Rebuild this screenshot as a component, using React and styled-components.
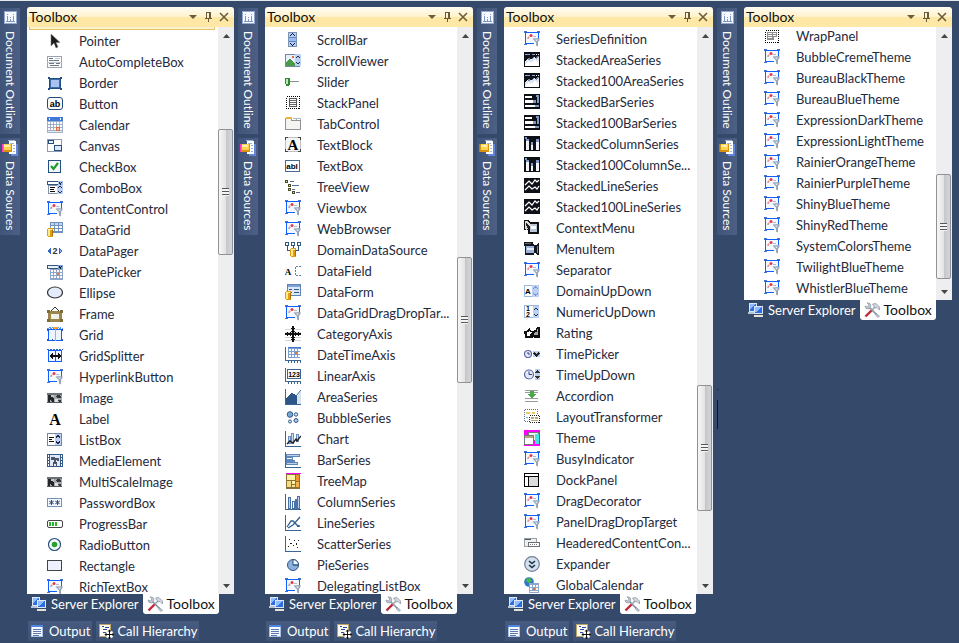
import React from "react";
import styled, { createGlobalStyle } from "styled-components";

const BLUE = "#3b6ea5";
const NAVY = "#2b4f81";

// small drawing helpers for the 16x16 icons
const R = ({ x, y, w, h, f }) => <rect x={x} y={y} width={w} height={h} fill={f} />;
const Box = ({ x, y, w, h, f = "#fff", s = BLUE }) => (
  <rect x={x + 0.5} y={y + 0.5} width={w - 1} height={h - 1} fill={f} stroke={s} />
);
const L = ({ d, s = NAVY, w = 1, ...rest }) => (
  <path d={d} fill="none" stroke={s} strokeWidth={w} {...rest} />
);
const T = ({ x, y, size, children, f = "#000", serif, weight = "bold" }) => (
  <text
    x={x}
    y={y}
    fontSize={size}
    fill={f}
    fontWeight={weight}
    textAnchor="middle"
    fontFamily={serif ? '"Liberation Serif", serif' : '"Liberation Sans", sans-serif'}
  >
    {children}
  </text>
);
const Smooth = ({ children }) => <g shapeRendering="auto">{children}</g>;

const Axes = () => <L d="M.5 0V15.5H16" s="#3a6594" />;

const Cylinder = ({ x, y }) => (
  <g transform={`translate(${x} ${y})`}>
    <path d="M0 1L1 0H5L6 1V8L5 9H1L0 8z" fill="#e0a010" />
    <path d="M1 2H3V8H1z" fill="#ffe88a" />
    <path d="M1 1H5V2H1z" fill="#fff3b8" />
    <path d="M5 2H6V8H5z" fill="#a8700a" />
  </g>
);

const UpDown = ({ x, y }) => (
  <g>
    <R x={x} y={y} w={6} h={12} f="#bcd0f4" />
    <L d={`M${x + 1} ${y + 4}l2 -2l2 2M${x + 1} ${y + 8}l2 2l2 -2`} s="#1b2c4c" />
  </g>
);

const CalGrid = ({ x, y }) => (
  <g>
    <R x={x} y={y} w={12} h={10} f="#7d9fd0" />
    {[0, 1, 2, 3].map((i) =>
      [0, 1, 2].map((j) => (
        <R
          key={`${i}${j}`}
          x={x + 1 + i * 3}
          y={y + 1 + j * 3}
          w={2}
          h={2}
          f={i === 2 && j === 1 ? "#f0703c" : "#fff"}
        />
      ))
    )}
  </g>
);

const Clock = ({ cx, cy, r }) => (
  <Smooth>
    <circle cx={cx} cy={cy} r={r} fill="#e4e8fa" stroke="#5a66a8" strokeWidth="1.2" />
    <L d={`M${cx} ${cy - r + 1.5}V${cy}H${cx + r - 1.5}`} s="#33407c" />
  </Smooth>
);

const Photo = () => (
  <g>
    <R x={0} y={3} w={15} h={10} f="#a4a8ac" />
    <R x={0} y={3} w={15} h={2} f="#6c7176" />
    <path d="M1 5H4L7 9V12H5L3 9V12H1z" fill="#22252a" />
    <path d="M8 6L12 5L14 7V8L10 8zM11 10H14V12H12z" fill="#34383e" />
    <R x={8} y={9} w={3} h={3} f="#dcdee0" />
    <R x={4} y={5} w={3} h={2} f="#c4c6c8" />
    <R x={0} y={12} w={15} h={1} f="#55595e" />
  </g>
);

const StackBlack = () => <R x={0} y={0} w={16} h={15} f="#0d1016" />;

const icons = {
  pointer: (
    <Smooth>
      <path d="M4 1V13L7 10L9 15L11 14L9 9.500H13z" fill="#1c1c1c" stroke="#777" strokeWidth=".5" />
    </Smooth>
  ),
  autocomplete: (
    <g>
      <Box x={0} y={2} w={15} h={12} s="#9aa3ad" />
      <L d="M2 4.500H6M2 6.500H12M2 9.500H7M9 9.500H13M3 11.500H12" s="#6c7887" />
      <L d="M8 4.500H13M0 8.500H15" s="#c3c9d0" />
    </g>
  ),
  border: (
    <g>
      <Box x={2} y={3} w={12} h={11} f="#a9c3f0" s="#1f4e86" />
      <L d="M3.500 4.500H12.500V12.500H3.500z" s="#3f6da3" />
      <path d="M1 2h2v2h-2zM13 2h2v2h-2zM1 13h2v2h-2zM13 13h2v2h-2z" fill="#1f4e86" />
    </g>
  ),
  button: (
    <g>
      <Smooth>
        <rect x=".5" y="1.500" width="15" height="12" rx="2.500" fill="#fafafa" stroke="#234a78" />
      </Smooth>
      <T x={8} y={11} size={9}>ab</T>
    </g>
  ),
  calendar: (
    <g>
      <R x={0} y={0} w={16} h={4} f="#3f78d8" />
      <path d="M3 1v2l-2 -1zM13 1v2l2 -1z" fill="#fff" />
      <R x={0} y={4} w={16} h={12} f="#9fb0c8" />
      {[1, 4, 7, 10, 13].map((x) =>
        [5, 8, 11].map((y) => <R key={`${x}${y}`} x={x} y={y} w={2} h={2} f="#fff" />)
      )}
      <R x={9} y={10} w={4} h={4} f="#e8693c" />
      <R x={10} y={11} w={2} h={2} f="#ffc6a8" />
      <path d="M1 14h14v1H1z" fill="#e6ecf5" />
    </g>
  ),
  canvas: (
    <g>
      <Box x={0} y={1} w={15} h={13} s="#8c9bb0" />
      <Box x={1} y={2} w={6} h={4} f="#e9f0fb" s="#26507f" />
      <Box x={7} y={7} w={8} h={6} f="#dde8fa" s="#26507f" />
    </g>
  ),
  check: (
    <g>
      <Box x={1} y={1} w={13} h={13} f="#f4f8fd" s="#23507f" />
      <Smooth><L d="M4 7L6.500 10L11 4" s="#1f9d28" w={2.2} /></Smooth>
    </g>
  ),
  combo: (
    <g>
      <Box x={0} y={1} w={15} h={4} s="#33577f" />
      <R x={11} y={1} w={5} h={4} f="#a9c0e8" />
      <L d="M12 2L13.500 4L15 2" s="#1b2c4c" />
      <Box x={1} y={5} w={10} h={9} s="#8294ac" />
      <L d="M3 7.500H8M3 9.500H7M3 11.500H8" s="#111" />
      <R x={10} y={5} w={6} h={9} f="#bcd0f4" />
      <L d="M11 8L13 6L15 8M11 11L13 13L15 11" s="#1b2c4c" />
    </g>
  ),
  content: (
    <g>
      <path d="M2 2h12v10h-12z" fill="#f4f8ff" />
      <L d="M1.500 1V12.500H10M1 1.500H15M14.500 1V8" s="#1060ff" />
      <path d="M0 0h3v1h-3zM13 0h3v1h-3zM0 13h3v1h-3zM0 1h1v1h-1zM15 1h1v1h-1z" fill="#4a72c8" />
      <L d="M3 7.500H5M9 5.500H12" s="#b9bac8" />
      <Smooth>
        <circle cx="7" cy="4.500" r="1.500" fill="#e03a4a" />
        <circle cx="4.500" cy="6.500" r="1" fill="#ef8a90" />
        <path d="M8.500 7.500L15.500 7V9L14 11V15.500L12 14.500V11.500z" fill="#98a5b6" />
        <path d="M11 8.500h3l-1.500 2z" fill="#e4e9ef" />
      </Smooth>
    </g>
  ),
  datagrid: (
    <g>
      <R x={3} y={0} w={13} h={11} f="#6f8fbf" />
      {[4, 8, 12].map((x) => [1, 4, 7].map((y) => <R key={`${x}${y}`} x={x} y={y} w={3} h={2} f={y === 1 ? "#c6d6ef" : "#fff"} />))}
      <Cylinder x={0} y={6} />
    </g>
  ),
  datapager: (
    <g>
      <path d="M0 8L4 4.500V11.500zM16 8L12 4.500V11.500z" fill="#2f66c8" />
      <path d="M2 8L3 7V9zM14 8L13 7V9z" fill="#9fbcf0" />
      <T x={8} y={11} size={9} f="#333">2</T>
    </g>
  ),
  datepicker: (
    <g>
      <Box x={0} y={1} w={15} h={4} s="#33577f" f="#eaf1fb" />
      <R x={11} y={1} w={5} h={4} f="#7fa0d0" />
      <L d="M12 2L13.500 4L15 2" s="#122" />
      <R x={3} y={5} w={13} h={11} f="#8fa6c8" />
      {[4, 7, 10, 13].map((x) => [6, 9, 12].map((y) => <R key={`${x}${y}`} x={x} y={y} w={2} h={2} f={x === 10 && y === 9 ? "#f0703c" : "#fff"} />))}
    </g>
  ),
  ellipse: (
    <Smooth><ellipse cx="8" cy="7.500" rx="7.500" ry="5.500" fill="#e2ecfd" stroke="#333" strokeWidth="1.200" /></Smooth>
  ),
  frame: (
    <g>
      <Smooth><L d="M4 5L8 1L12 5" s="#333" /></Smooth>
      <rect x="2.500" y="6.500" width="11" height="8" fill="#f2f0ea" stroke="#9a854a" strokeWidth="3" />
      <path d="M0 4h3v3h-3zM13 4h3v3h-3zM0 13h3v3h-3zM13 13h3v3h-3z" fill="#7d6a36" />
    </g>
  ),
  grid: (
    <g>
      <Box x={1} y={2} w={14} h={12} f="#edf4ff" s="#1060ff" />
      <L d="M0 1.500H16M2 0.500H6M10 0.500H14" s="#5f8fe8" strokeDasharray="2 1" />
      <R x={8} y={2} w={1} h={12} f="#f5a71c" />
      <path d="M6 0h5l-2 3h-1z" fill="#f5a71c" />
      <path d="M0 2h2v2h-2zM14 2h2v2h-2zM0 12h2v2h-2zM14 12h2v2h-2zM5 12h1v2h-1z" fill="#1e55c8" />
    </g>
  ),
  gridsplitter: (
    <g>
      <Box x={1} y={2} w={14} h={12} f="#edf4ff" s="#1060ff" />
      <L d="M0 1.500H16" s="#2c63cf" strokeDasharray="2 1" />
      <L d="M8.500 2V14" s="#1060ff" />
      <path d="M2 8L6 5V7H11V5L15 8L11 11V9H6V11z" fill="#111" />
    </g>
  ),
  image: <Photo />,
  label: <T x={8} y={14} size={16} serif>A</T>,
  listbox: (
    <g>
      <Box x={0} y={1} w={15} h={13} s="#7187a3" />
      <L d="M2 5.500H7M2 7.500H5M2 9.500H7" s="#111" />
      <R x={8} y={2} w={6} h={11} f="#bcd0f4" />
      <L d="M9 5.500L11 3.500L13 5.500M9 9.500L11 11.500L13 9.500" s="#1b2c4c" />
    </g>
  ),
  media: (
    <g>
      <R x={0} y={1} w={16} h={13} f="#365a86" />
      <R x={3} y={2} w={10} h={11} f="#dfe8f4" />
      {[2, 5, 8, 11].map((y) => <path key={y} d={`M1 ${y}h1v2h-1zM14 ${y}h1v2h-1z`} fill="#fff" />)}
      <path d="M4 4h4v1h4v3h-2v-1h-1v2h1v4h-1v-2h-2v2h-1v-4h1v-2h-3z" fill="#4a5666" />
    </g>
  ),
  password: (
    <g>
      <Box x={0} y={3} w={15} h={9} f="#f2f7ff" s="#7593b8" />
      <Smooth>
        <L d="M4.500 5V10M2.300 6.200L6.700 8.800M6.700 6.200L2.300 8.800M10.500 5V10M8.300 6.200L12.700 8.800M12.700 6.200L8.300 8.800" s="#33476a" />
      </Smooth>
    </g>
  ),
  progress: (
    <g>
      <Smooth><rect x=".5" y="4.500" width="15" height="7" rx="1.500" fill="#fff" stroke="#444" /></Smooth>
      <path d="M2 6h2v4h-2zM5 6h2v4h-2zM8 6h2v4h-2z" fill="#27b52c" />
    </g>
  ),
  radio: (
    <Smooth>
      <circle cx="7.500" cy="7.500" r="6" fill="#f5f9ff" stroke="#28517f" strokeWidth="1.200" />
      <circle cx="7.500" cy="7.500" r="2.800" fill="#2aa02e" />
    </Smooth>
  ),
  rectangle: <Box x={0} y={2} w={15} h={11} f="#edf2fd" s="#444" />,
  scrollbar: (
    <g>
      <Box x={3} y={0} w={9} h={15} f="#b9cef4" s="#7a93b8" />
      <R x={4} y={5} w={7} h={5} f="#5c86c8" />
      <path d="M4 6h7v3H4z" fill="#9dbcf0" />
      <L d="M5 4L7.500 1.500L10 4M5 11L7.500 13.500L10 11" s="#101828" />
    </g>
  ),
  scrollviewer: (
    <g>
      <Box x={0} y={1} w={15} h={13} f="#e6effc" s="#7187a3" />
      <circle cx="8" cy="4" r="1.500" fill="#e8693c" />
      <path d="M1 13V10L5 5L10 11V13z" fill="#4b9a4a" />
      <R x={10} y={1} w={6} h={12} f="#bcd0f4" />
      <L d="M11 5L13 3L15 5M11 9L13 11L15 9" s="#1b2c4c" />
    </g>
  ),
  slider: (
    <g>
      <L d="M5 7.500H14" s="#8c9196" />
      <path d="M0 4h5v6l-1 1v1h-3v-1l-1 -1z" fill="#2d8a2e" />
      <path d="M1 5h2v5h-2z" fill="#b8f0b0" />
    </g>
  ),
  stackpanel: (
    <g>
      <L d="M1.500 1.500H14.500V13.500H1.500z" s="#000" strokeDasharray="1 1" />
      <Box x={4} y={3} w={8} h={9} s="#555" />
      <L d="M5 5.500H11M5 7.500H11M5 9.500H11" s="#666" />
    </g>
  ),
  wrappanel: (
    <g>
      <L d="M1.500 2.500H14.500V14.500H1.500z" s="#000" strokeDasharray="1 1" />
      <path d="M3 4h10v5h-3v3h-7z" fill="#8f8f8f" />
      <path d="M4 5h4v1h-4zM4 7h4v1h-4zM4 9h4v1h-4zM9 5h3v1h-3zM9 7h3v1h-3z" fill="#fff" />
    </g>
  ),
  tab: (
    <g>
      <path d="M.5 12.500V2.500L1.500 1.500H6.500V4.500H15.500V13.500H.5z" fill="#f4f4f0" stroke="#8f9296" />
      <R x={1} y={1} w={6} h={2} f="#f0b23c" />
      <L d="M8 2.500H11V4M12 2.500H15V4" s="#b5b8bc" />
    </g>
  ),
  textblock: (
    <g>
      <Box x={0} y={0} w={16} h={15} f="#f5f5f5" s="#c0c0c0" />
      <path d="M0 0h3v1H1v2H0zM13 0h3v3h-1V1h-2zM0 12h1v2h2v1H0zM15 12h1v3h-3v-1h2z" fill="#444" />
      <T x={8} y={13} size={15} serif>A</T>
    </g>
  ),
  textbox: (
    <g>
      <Box x={0} y={2} w={15} h={12} s="#4a6a92" />
      <T x={7} y={11} size={8}>abl</T>
    </g>
  ),
  treeview: (
    <g>
      <path d="M0 1h3v3h-3zM3 5h3v3h-3zM3 9h3v3h-3zM7 12h3v3h-3z" fill="#4b4b28" />
      <path d="M1 2h1v1h-1zM4 6h1v1h-1zM4 10h1v1h-1zM8 13h1v1h-1z" fill="#e8d98c" />
      <L d="M5 2.500H9M7 6.500H14M7 10.500H10M11 13.500H15" s="#4f6f99" />
    </g>
  ),
  domainds: (
    <g>
      <Box x={0} y={0} w={4} h={4} s="#33577f" />
      <Box x={6} y={0} w={4} h={4} s="#33577f" />
      <Box x={12} y={0} w={4} h={4} s="#33577f" />
      <L d="M2.500 4V8.500H5M8.500 4V6M13.500 4V8.500H11" s="#33577f" />
      <Cylinder x={5} y={6} />
    </g>
  ),
  datafield: (
    <g>
      <T x={3} y={12} size={9} serif>A</T>
      <L d="M16 3.500H10.500V12.500H16" s="#5f7ea8" strokeDasharray="2 1" />
    </g>
  ),
  dataform: (
    <g>
      <Box x={2} y={0} w={14} h={12} f="#dbe7fa" s="#5f83b5" />
      <R x={3} y={1} w={12} h={2} f="#7fa3d8" />
      <L d="M4 5.500H7M4 8.500H7M9 5.500H14M9 8.500H14" s="#33577f" />
      <Cylinder x={0} y={7} />
    </g>
  ),
  categoryaxis: (
    <g>
      <L d="M0 3.500H16M0 6.500H16M0 11.500H16M0 14.500H16" s="#d5d5d5" />
      <L d="M8 0V16M0 8H16" s="#111" w={2} />
      <L d="M2.500 6V10M5.500 6V10M10.500 6V10M13.500 6V10M6 2.500H10M6 5.500H10M6 11.500H10M6 13.500H10" s="#111" />
    </g>
  ),
  datetimeaxis: (
    <g>
      <L d="M.5 0V13.500H16" s="#3a6594" />
      <L d="M3.500 14V16M6.500 14V16M9.500 14V16M12.500 14V16M15.500 14V16" s="#3a6594" />
      <R x={3} y={0} w={13} h={2} f="#3f78d8" />
      <CalGrid x={3} y={1} />
    </g>
  ),
  linearaxis: (
    <g>
      <L d="M.5 0V13.500H16" s="#3a6594" />
      <L d="M3.500 14V16M6.500 14V16M9.500 14V16M12.500 14V16M15.500 14V16" s="#3a6594" />
      <Box x={2} y={1} w={14} h={10} s="#3a6594" />
      <T x={9} y={9} size={7}>123</T>
    </g>
  ),
  area: (
    <g>
      <path d="M1 15V9L6 4L9 5L12 8L12 15z" fill="#2c5687" />
      <path d="M12 8L16 2V15H12z" fill="#d8e3f2" />
      <Smooth><L d="M11 7L16 1" s="#3a6594" /></Smooth>
      <Axes />
    </g>
  ),
  bubble: (
    <Smooth>
      <circle cx="5" cy="4.500" r="2.800" fill="#7aa6d4" stroke="#2c5687" />
      <circle cx="11" cy="4.500" r="1.700" fill="#dce9f7" stroke="#2c5687" />
      <circle cx="5" cy="11.500" r="1.500" fill="#dce9f7" stroke="#2c5687" />
      <circle cx="11" cy="10.500" r="2" fill="#a9c8e8" stroke="#2c5687" />
    </Smooth>
  ),
  chart: (
    <g>
      <Axes />
      <Box x={3} y={5} w={3} h={8} f="#c9daf2" s="#6b8fc0" />
      <Box x={6} y={2} w={3} h={11} f="#c9daf2" s="#6b8fc0" />
      <Box x={11} y={3} w={3} h={8} f="#c9daf2" s="#6b8fc0" />
      <Smooth><L d="M2 13L5 10L8 12L11 8L12 10L16 5" s="#222" w={1.400} /></Smooth>
    </g>
  ),
  bar: (
    <g>
      <Axes />
      <Box x={1} y={2} w={14} h={3} f="#bcd0ee" s="#5f86b8" />
      <Box x={1} y={5} w={7} h={3} f="#fff" s="#5f86b8" />
      <Box x={1} y={8} w={9} h={2} f="#bcd0ee" s="#5f86b8" />
      <Box x={1} y={10} w={12} h={3} f="#bcd0ee" s="#5f86b8" />
    </g>
  ),
  treemap: (
    <g>
      <R x={1} y={0} w={14} h={16} f="#8a7238" />
      <R x={1} y={0} w={15} h={1} f="#ff00ff" />
      <R x={2} y={2} w={8} h={5} f="#fff2a8" />
      <R x={2} y={8} w={4} h={6} f="#f3dc84" />
      <R x={7} y={8} w={3} h={3} f="#fff2a8" />
      <R x={11} y={2} w={3} h={6} f="#f0982c" />
      <R x={11} y={9} w={3} h={5} f="#f5b44a" />
      <R x={7} y={12} w={3} h={2} f="#fbe48a" />
    </g>
  ),
  column: (
    <g>
      <Axes />
      <Box x={3} y={3} w={3} h={12} f="#bcd0ee" s="#4a74a8" />
      <Box x={7} y={7} w={3} h={8} f="#fff" s="#4a74a8" />
      <Box x={10} y={5} w={2} h={10} f="#bcd0ee" s="#4a74a8" />
      <Box x={12} y={2} w={3} h={13} f="#bcd0ee" s="#4a74a8" />
    </g>
  ),
  line: (
    <g>
      <Axes />
      <Smooth><L d="M2 12L6 6H8L13 11L15 11M3 13L8 10L15 2" s="#33608f" w={1.300} /></Smooth>
      <R x={12} y={10} w={2} h={2} f="#33608f" />
    </g>
  ),
  scatter: (
    <g>
      <Axes />
      <path d="M4 3h1v1h-1zM5 7h2v1h-2zM3 10h1v1h-1zM9 4h1v1h-1zM8 9h1v1h-1zM11 7h1v2h-1zM13 4h1v1h-1zM12 11h1v1h-1z" fill="#222" />
    </g>
  ),
  pie: (
    <Smooth>
      <circle cx="8" cy="8" r="5.500" fill="#8fb2dc" stroke="#2c5687" />
      <path d="M8 8V2.500A5.500 5.500 0 0 1 13.500 8z" fill="#f4f8fd" stroke="#2c5687" />
      <path d="M8 8H13.500" stroke="#2c5687" />
    </Smooth>
  ),
  stackedarea: (
    <g>
      <StackBlack />
      <path d="M1 2h5v1h-5zM8 2h3v1h-3z" fill="#8fa6d8" />
      <path d="M12 2h1v1h-1zM14 2h1v1h-1z" fill="#fff" />
      <path d="M1 9L4 6L7 7L9 5L11 6L14 4H15V14H1z" fill="#7486a8" />
      <path d="M1 11V9L3 7L5 8L7 6L8 8L10 5L12 7L15 5V14H1z" fill="#dfe5f0" />
      <path d="M1 14V12L4 9L6 11L8 10L11 8L13 10L15 8V14z" fill="#fff" />
    </g>
  ),
  stackedbar: (
    <g>
      <StackBlack />
      <path d="M1 2h7v2h-7zM1 6h8v3h-8zM1 11h10v2h-10z" fill="#fff" />
      <path d="M12 1h3v2h-3zM13 3h2v6h-2zM9 6h3v3h-3zM11 11h4v2h-4z" fill="#8298c4" />
    </g>
  ),
  stackedcolumn: (
    <g>
      <StackBlack />
      <path d="M2 5h3v9h-3zM7 9h2v5h-2zM12 6h3v8h-3z" fill="#f0f2f8" />
      <path d="M1 1h2v2h-2zM2 3h3v2h-3zM7 6h2v3h-2zM12 3h3v3h-3z" fill="#8298c4" />
    </g>
  ),
  stackedline: (
    <g>
      <StackBlack />
      <Smooth><L d="M1 7L5 3L8 6L11 2L13 4L15 2M1 12L5 8L8 11L11 9L13 11L15 8" s="#fff" w={1.200} /></Smooth>
    </g>
  ),
  contextmenu: (
    <g>
      <path d="M0 0h4l2 2h9v12h-11v-4h-4z" fill="#111" />
      <R x={6} y={4} w={7} h={8} f="#b8c4d8" />
      <R x={7} y={6} w={5} h={3} f="#fff" />
      <path d="M1 1h2l5 5l-3 1l-2 3l-2 -1z" fill="#d8d8d8" />
      <path d="M2 3l4 4l-3 1z" fill="#222" />
    </g>
  ),
  menuitem: (
    <g>
      <path d="M0 1h9l1 3h2l2 -2h1v12h-2l-2 -2h-1v2H1V5H0z" fill="#15181f" />
      <R x={2} y={5} w={8} h={7} f="#9db2dc" />
      <R x={3} y={7} w={7} h={2} f="#e6ecfa" />
      <R x={13} y={5} w={1} h={7} f="#7a8ab0" />
      <R x={1} y={2} w={6} h={1} f="#666" />
    </g>
  ),
  domainupdown: (
    <g>
      <Box x={0} y={2} w={15} h={12} s="#9db6dc" />
      <R x={8} y={2} w={7} h={12} f="#bcd0f4" />
      <L d="M9 6L11.500 4L14 6M9 10L11.500 12L14 10" s="#7893c4" />
      <T x={4} y={11} size={8}>A</T>
    </g>
  ),
  numericupdown: (
    <g>
      <Box x={0} y={1} w={15} h={13} s="#9db6dc" />
      <UpDown x={9} y={2} />
      <T x={4} y={7} size={7}>1</T>
      <T x={4} y={13} size={7}>2</T>
    </g>
  ),
  rating: (
    <g>
      <path d="M0 6h3l2 -3h1l1 3h2l1 -1h2l1 -3h3v11h-6l-1 -1l-1 1h-7v-3l-1 -2z" fill="#111" />
      <path d="M3 7h1l1 -1h1v1h2l-2 2v2h-3z" fill="#fff" />
      <path d="M11 7h2v-3h1v6h-4z" fill="#a8a8a8" />
    </g>
  ),
  timepicker: (
    <g>
      <Clock cx={4} cy={8} r={3.500} />
      <R x={9} y={5} w={7} h={6} f="#bcd0f4" />
      <L d="M10 7L12.500 9.500L15 7" s="#222" w={1.500} />
    </g>
  ),
  timeupdown: (
    <g>
      <Clock cx={5} cy={7.500} r={4.500} />
      <R x={11} y={2} w={5} h={11} f="#bcd0f4" />
      <path d="M11 6h5l-2.500 -3zM11 9h5l-2.500 3z" fill="#333" />
    </g>
  ),
  accordion: (
    <g>
      <L d="M1 2.500H14M1 4.500H14M1 10.500H14M1 13.500H14" s="#9a9a9a" />
      <path d="M6 3h4v3h2l-4 5l-4 -5h2z" fill="#4aa84a" />
    </g>
  ),
  layout: (
    <g>
      <L d="M.5 .5H13.500V5M.5 1V12.500H5" s="#4a74b0" strokeDasharray="1 1" />
      <path d="M2 3h4v2h-4zM8 3h3v2h-3z" fill="#f0c860" />
      <L d="M5.500 6.500H15.500V13.500H5.500z" s="#222" strokeDasharray="1 1" />
      <path d="M7 8h3v2h-3zM11 8h3v2h-3zM7 11h7v1h-7z" fill="#b8a878" />
      <L d="M2 8.500H4" s="#8aa0c0" />
    </g>
  ),
  theme: (
    <g>
      <R x={0} y={0} w={16} h={16} f="#ff00ff" />
      <Box x={4} y={2} w={11} h={9} f="#e8f4f4" s="#777" />
      <R x={11} y={4} w={4} h={10} f="#45e0e0" />
      <Box x={0} y={5} w={10} h={10} f="#fff" s="#777" />
      <R x={1} y={6} w={8} h={2} f="#b4a878" />
    </g>
  ),
  dockpanel: (
    <g>
      <Box x={0} y={1} w={15} h={14} f="#dcdcdc" s="#000" />
      <R x={1} y={2} w={13} h={2} f="#fff" />
      <R x={1} y={4} w={3} h={10} f="#fff" />
      <L d="M0 4.500H15M4.500 4V15" s="#000" />
    </g>
  ),
  headered: (
    <g>
      <Box x={0} y={3} w={13} h={9} f="#eef0f2" s="#9aa0a8" />
      <L d="M1 4.500H7" s="#555" />
      <Box x={4} y={7} w={12} h={5} f="#fff" s="#6a7078" />
      <L d="M6 9.500H14" s="#777" strokeDasharray="1 1" />
    </g>
  ),
  expander: (
    <Smooth>
      <circle cx="8" cy="8" r="7.300" fill="#d4e0ee" stroke="#6c8098" strokeWidth="1.200" />
      <L d="M5 5L8 7.500L11 5M5 9L8 11.500L11 9" s="#1c3048" w={1.600} />
    </Smooth>
  ),
  globe: (
    <g>
      <Smooth>
        <circle cx="5" cy="5" r="4.800" fill="#2f78c8" />
        <path d="M2 2L6 1L8 4L5 6L3 5zM5 7L8 8L6 10z" fill="#4cb848" />
      </Smooth>
      <R x={5} y={6} w={10} h={10} f="#8fa6c8" />
      {[6, 9, 12].map((x) => [8, 11].map((y) => <R key={`${x}${y}`} x={x} y={y} w={2} h={2} f={x === 9 && y === 11 ? "#e8693c" : "#fff"} />))}
      <R x={6} y={14} w={8} h={1} f="#fff" />
    </g>
  ),
  outline: (
    <g>
      <R x={2} y={1} w={13} h={13} f="#93a9d2" />
      <R x={3} y={2} w={11} h={11} f="#f6f9ff" />
      <L d="M5.500 4V5M5.500 6V11M8.500 7V8M8.500 9V11M11.500 4V5M11.500 6V11" s="#7e95c4" />
      <L d="M4 11.500H13" s="#7e95c4" />
    </g>
  ),
  sources: (
    <g>
      <R x={9} y={4} w={7} h={12} f="#5f86d8" />
      <R x={7} y={1} w={7} h={13} f="#fff" />
      <L d="M6 .5H13M8 3.500H12M11 5.500H13M11 8.500H13M11 11.500H13" s="#9db2dc" />
      <R x={0} y={4} w={10} h={8} f="#d89410" />
      <R x={2} y={4} w={7} h={6} f="#ffd44c" />
      <R x={2} y={5} w={6} h={2} f="#fff0b0" />
      <R x={0} y={4} w={1} h={8} f="#ff38b8" />
    </g>
  ),
  server: (
    <g>
      <Box x={1} y={1} w={8} h={9} f="#2f6ee0" s="#dbe6f6" />
      <path d="M2 2h5l-4 5h-1z" fill="#8fbcff" />
      <R x={0} y={10} w={7} h={2} f="#b8c4d4" />
      <Box x={6} y={4} w={9} h={8} f="#2f6ee0" s="#dbe6f6" />
      <path d="M7 5h6l-4 5h-2z" fill="#8fbcff" />
      <R x={6} y={13} w={9} h={2} f="#e6e2d4" />
    </g>
  ),
  tools: (
    <Smooth>
      <L d="M5 5L12.500 12.500" s="#8390a0" w={1.600} />
      <path d="M1 4L3.500 5L5 3L3 .8L6 1.500L7 4L5 7L2 6.500z" fill="#c2cad4" stroke="#7a8594" strokeWidth=".6" />
      <path d="M12 11.500L15.500 14L14 15.500L11.500 13z" fill="#c2cad4" stroke="#7a8594" strokeWidth=".6" />
      <L d="M1.500 14.500L7.500 8.500" s="#c3273a" w={2.400} />
      <L d="M8 8L11.500 4.500" s="#9aa4b2" w={1.600} />
      <path d="M8.500 2L12 1.500L15.500 5V8L13 5.500L11 6z" fill="#d0d6de" stroke="#7a8594" strokeWidth=".6" />
    </Smooth>
  ),
  output: (
    <g>
      <Box x={1} y={2} w={12} h={12} f="#f6f9ff" s="#a8c0e8" />
      <R x={1} y={2} w={12} h={2} f="#4f86e0" />
      <L d="M3 6.500H11M3 8.500H11M3 10.500H11M3 12.500H9" s="#5b78b0" />
    </g>
  ),
  hierarchy: (
    <g>
      <Box x={1} y={1} w={12} h={13} f="#fdfbf0" s="#b8a468" />
      <L d="M4 3.500H6M5 6.500H9M5 9.500H8M7 4.500H11" s="#2848a8" />
      <Smooth>
        <circle cx="11.500" cy="11.500" r="4" fill="#fff" />
        <path d="M11.500 6.500L13.500 8.500H9.500zM11.500 16.500L13.500 14.500H9.500zM6.500 11.500L8.500 9.500V13.500zM16.500 11.500L14.500 9.500V13.500z" fill="#111" />
        <L d="M11.500 8V15M8 11.500H15" s="#111" />
      </Smooth>
    </g>
  ),
};

function Icon({ name }) {
  return (
    <IconSvg viewBox="0 0 16 16" shapeRendering="crispEdges" aria-hidden="true">
      {icons[name]}
    </IconSvg>
  );
}

const panels = [
  {
    rows: 27,
    offset: 3,
    thumb: [85, 126],
    selected: true,
    footer: true,
    items: [
      ["pointer", "Pointer"],
      ["autocomplete", "AutoCompleteBox"],
      ["border", "Border"],
      ["button", "Button"],
      ["calendar", "Calendar"],
      ["canvas", "Canvas"],
      ["check", "CheckBox"],
      ["combo", "ComboBox"],
      ["content", "ContentControl"],
      ["datagrid", "DataGrid"],
      ["datapager", "DataPager"],
      ["datepicker", "DatePicker"],
      ["ellipse", "Ellipse"],
      ["frame", "Frame"],
      ["grid", "Grid"],
      ["gridsplitter", "GridSplitter"],
      ["content", "HyperlinkButton"],
      ["image", "Image"],
      ["label", "Label"],
      ["listbox", "ListBox"],
      ["media", "MediaElement"],
      ["image", "MultiScaleImage"],
      ["password", "PasswordBox"],
      ["progress", "ProgressBar"],
      ["radio", "RadioButton"],
      ["rectangle", "Rectangle"],
      ["content", "RichTextBox"],
    ],
  },
  {
    rows: 27,
    offset: 2,
    thumb: [213, 126],
    footer: true,
    items: [
      ["scrollbar", "ScrollBar"],
      ["scrollviewer", "ScrollViewer"],
      ["slider", "Slider"],
      ["stackpanel", "StackPanel"],
      ["tab", "TabControl"],
      ["textblock", "TextBlock"],
      ["textbox", "TextBox"],
      ["treeview", "TreeView"],
      ["content", "Viewbox"],
      ["content", "WebBrowser"],
      ["domainds", "DomainDataSource"],
      ["datafield", "DataField"],
      ["dataform", "DataForm"],
      ["content", "DataGridDragDropTar..."],
      ["categoryaxis", "CategoryAxis"],
      ["datetimeaxis", "DateTimeAxis"],
      ["linearaxis", "LinearAxis"],
      ["area", "AreaSeries"],
      ["bubble", "BubbleSeries"],
      ["chart", "Chart"],
      ["bar", "BarSeries"],
      ["treemap", "TreeMap"],
      ["column", "ColumnSeries"],
      ["line", "LineSeries"],
      ["scatter", "ScatterSeries"],
      ["pie", "PieSeries"],
      ["content", "DelegatingListBox"],
    ],
  },
  {
    rows: 27,
    offset: 1,
    thumb: [341, 126],
    footer: true,
    items: [
      ["content", "SeriesDefinition"],
      ["stackedarea", "StackedAreaSeries"],
      ["stackedarea", "Stacked100AreaSeries"],
      ["stackedbar", "StackedBarSeries"],
      ["stackedbar", "Stacked100BarSeries"],
      ["stackedcolumn", "StackedColumnSeries"],
      ["stackedcolumn", "Stacked100ColumnSe..."],
      ["stackedline", "StackedLineSeries"],
      ["stackedline", "Stacked100LineSeries"],
      ["contextmenu", "ContextMenu"],
      ["menuitem", "MenuItem"],
      ["content", "Separator"],
      ["domainupdown", "DomainUpDown"],
      ["numericupdown", "NumericUpDown"],
      ["rating", "Rating"],
      ["timepicker", "TimePicker"],
      ["timeupdown", "TimeUpDown"],
      ["accordion", "Accordion"],
      ["layout", "LayoutTransformer"],
      ["theme", "Theme"],
      ["content", "BusyIndicator"],
      ["dockpanel", "DockPanel"],
      ["content", "DragDecorator"],
      ["content", "PanelDragDropTarget"],
      ["headered", "HeaderedContentCon..."],
      ["expander", "Expander"],
      ["globe", "GlobalCalendar"],
    ],
  },
  {
    rows: 13,
    offset: -2,
    thumb: [130, 105],
    caret: true,
    items: [
      ["wrappanel", "WrapPanel"],
      ["content", "BubbleCremeTheme"],
      ["content", "BureauBlackTheme"],
      ["content", "BureauBlueTheme"],
      ["content", "ExpressionDarkTheme"],
      ["content", "ExpressionLightTheme"],
      ["content", "RainierOrangeTheme"],
      ["content", "RainierPurpleTheme"],
      ["content", "ShinyBlueTheme"],
      ["content", "ShinyRedTheme"],
      ["content", "SystemColorsTheme"],
      ["content", "TwilightBlueTheme"],
      ["content", "WhistlerBlueTheme"],
    ],
  },
];

function Toolbox({ panel }) {
  return (
    <Column>
      <Rail>
        <RailTab>
          <Icon name="outline" />
          Document Outline
        </RailTab>
        <RailTab>
          <Icon name="sources" />
          Data Sources
        </RailTab>
        {panel.caret && <Caret />}
      </Rail>
      <Main>
        <Header>
          <Title>Toolbox</Title>
          <HeaderButton aria-label="Window position">
            <svg width="9" height="10" viewBox="0 0 9 10">
              <path d="M0 3H8L4 7z" fill="#6b5c3a" />
            </svg>
          </HeaderButton>
          <HeaderButton aria-label="Auto hide">
            <svg width="9" height="10" viewBox="0 0 9 10" shapeRendering="crispEdges">
              <path d="M2.500 6V.5H6.500V6M1 6.500H8M4.500 7V10" fill="none" stroke="#6b5c3a" />
              <path d="M5 1h1v5h-1z" fill="#6b5c3a" />
            </svg>
          </HeaderButton>
          <HeaderButton aria-label="Close">
            <svg width="10" height="10" viewBox="0 0 10 10">
              <path d="M1 1L9 9M9 1L1 9" fill="none" stroke="#6b5c3a" strokeWidth="1.600" />
            </svg>
          </HeaderButton>
        </Header>
        <Body $rows={panel.rows}>
          <List $offset={panel.offset}>
            {panel.selected && <SelectedEdge />}
            {panel.items.map(([icon, label]) => (
              <li key={label}>
                <Item>
                  <Icon name={icon} />
                  {label}
                </Item>
              </li>
            ))}
          </List>
          <ScrollBar>
            <ScrollButton aria-label="Scroll up">
              <svg width="7" height="4" viewBox="0 0 7 4">
                <path d="M0 4L3.500 0L7 4z" fill="#444" />
              </svg>
            </ScrollButton>
            <Track>
              <Thumb $top={panel.thumb[0]} $size={panel.thumb[1]}>
                <Grip />
              </Thumb>
            </Track>
            <ScrollButton aria-label="Scroll down">
              <svg width="7" height="4" viewBox="0 0 7 4">
                <path d="M0 0H7L3.500 4z" fill="#444" />
              </svg>
            </ScrollButton>
          </ScrollBar>
        </Body>
        <Tabs>
          <Tab>
            <Icon name="server" />
            Server Explorer
          </Tab>
          <Tab $active>
            <Icon name="tools" />
            Toolbox
          </Tab>
        </Tabs>
        {panel.footer && (
          <Footer>
            <FooterTab>
              <Icon name="output" />
              Output
            </FooterTab>
            <FooterTab>
              <Icon name="hierarchy" />
              Call Hierarchy
            </FooterTab>
          </Footer>
        )}
      </Main>
    </Column>
  );
}

export default function App() {
  return (
    <Page>
      <GlobalStyle />
      {panels.map((panel, index) => (
        <Toolbox key={index} panel={panel} />
      ))}
    </Page>
  );
}

const GlobalStyle = createGlobalStyle`
  * {
    box-sizing: border-box;
  }
  body {
    margin: 0;
    background-color: #35496a;
    font-family: Lato, "Open Sans", sans-serif;
    font-size: 13px;
    line-height: 20px;
  }
  button {
    font: inherit;
    color: inherit;
    border: none;
    background: none;
    padding: 0;
    margin: 0;
    white-space: nowrap;
  }
`;

const Page = styled.main`
  display: grid;
  grid-template-columns: 238fr 239fr 240fr 239fr;
  min-height: 100vh;
  padding: 6px 3px 0 0;
  border-top: 1px solid #e4e9ee;
`;

const Column = styled.section`
  display: flex;
  gap: 7px;
  min-width: 0;
  padding-right: 4px;
`;

const Rail = styled.nav`
  display: flex;
  flex-direction: column;
  flex: none;
  width: 20px;
  gap: 4px;
  padding-top: 1px;
`;

const RailTab = styled.button`
  display: flex;
  align-items: center;
  gap: 5px;
  width: 20px;
  padding: 2px 0 5px;
  writing-mode: vertical-rl;
  font-size: 12px;
  color: #fff;
  background: linear-gradient(to right, #3f5478, #4b6084);
`;

const Caret = styled.div`
  width: 1px;
  height: 40px;
  margin-top: 150px;
  background: linear-gradient(#10151f 1px, transparent 1px 11px, #10151f 11px);
`;

const Main = styled.div`
  flex: 1;
  min-width: 0;
`;

const Header = styled.header`
  display: flex;
  align-items: center;
  gap: 6px;
  height: 20px;
  padding: 0 5px 0 2px;
  border-radius: 3px 3px 0 0;
  background: linear-gradient(#fffcf2, #fff2cc 50%, #ffe8a6 50%, #ffe8a6);
`;

const Title = styled.h2`
  flex: 1;
  margin: 0;
  font-size: 14px;
  font-weight: 400;
  line-height: 20px;
  color: #111;
`;

const HeaderButton = styled.button`
  display: flex;
`;

const Body = styled.div`
  display: flex;
  height: ${({ $rows }) => $rows * 21}px;
  overflow: hidden;
  background-color: #fff;
`;

const List = styled.ul`
  flex: 1;
  min-width: 0;
  margin: 0;
  padding: 0;
  padding-top: ${({ $offset }) => Math.max($offset, 0)}px;
  margin-top: ${({ $offset }) => Math.min($offset, 0)}px;
  list-style: none;
  position: relative;
`;

const SelectedEdge = styled.li`
  position: absolute;
  top: 0;
  left: 2px;
  right: 3px;
  height: 3px;
  border: 1px solid #e5c365;
  border-top: none;
  background-color: #fff3cf;
`;

const Item = styled.button`
  display: flex;
  align-items: center;
  gap: 16px;
  width: 100%;
  height: 21px;
  padding-left: 20px;
  color: #1f2a3c;
`;

const IconSvg = styled.svg`
  flex: none;
  width: 16px;
  height: 16px;
`;

const ScrollBar = styled.div`
  display: flex;
  flex-direction: column;
  flex: none;
  width: 16px;
  background-color: #eeeef0;
`;

const ScrollButton = styled.button`
  display: flex;
  align-items: center;
  justify-content: center;
  height: 17px;
`;

const Track = styled.div`
  flex: 1;
`;

const Thumb = styled.div`
  display: flex;
  align-items: center;
  justify-content: center;
  width: 15px;
  height: ${({ $size }) => $size}px;
  margin-top: ${({ $top }) => $top}px;
  border: 1px solid #8f9194;
  border-radius: 2px;
  background: linear-gradient(to right, #f6f6f6, #e4e4e6 50%, #c6c7cb 55%, #d4d5d9);
`;

const Grip = styled.span`
  width: 7px;
  height: 8px;
  background: repeating-linear-gradient(#55575c 0 1px, #f4f4f4 1px 3px);
`;

const Tabs = styled.div`
  display: flex;
  height: 20px;
`;

const Tab = styled.button`
  display: flex;
  align-items: center;
  gap: 4px;
  height: 20px;
  padding: 0 4px;
  border-radius: 0 0 3px 3px;
  font-size: ${({ $active }) => ($active ? 14 : 13)}px;
  color: ${({ $active }) => ($active ? "#111" : "#fff")};
  background-color: ${({ $active }) => ($active ? "#fff" : "transparent")};
`;

const Footer = styled.footer`
  display: flex;
  gap: 4px;
  margin-top: 7px;
  padding-left: 1px;
`;

const FooterTab = styled.button`
  display: flex;
  align-items: center;
  gap: 3px;
  height: 20px;
  padding: 0 2px;
  color: #fff;
  background: linear-gradient(#465b7f, #3d5275);
`;
